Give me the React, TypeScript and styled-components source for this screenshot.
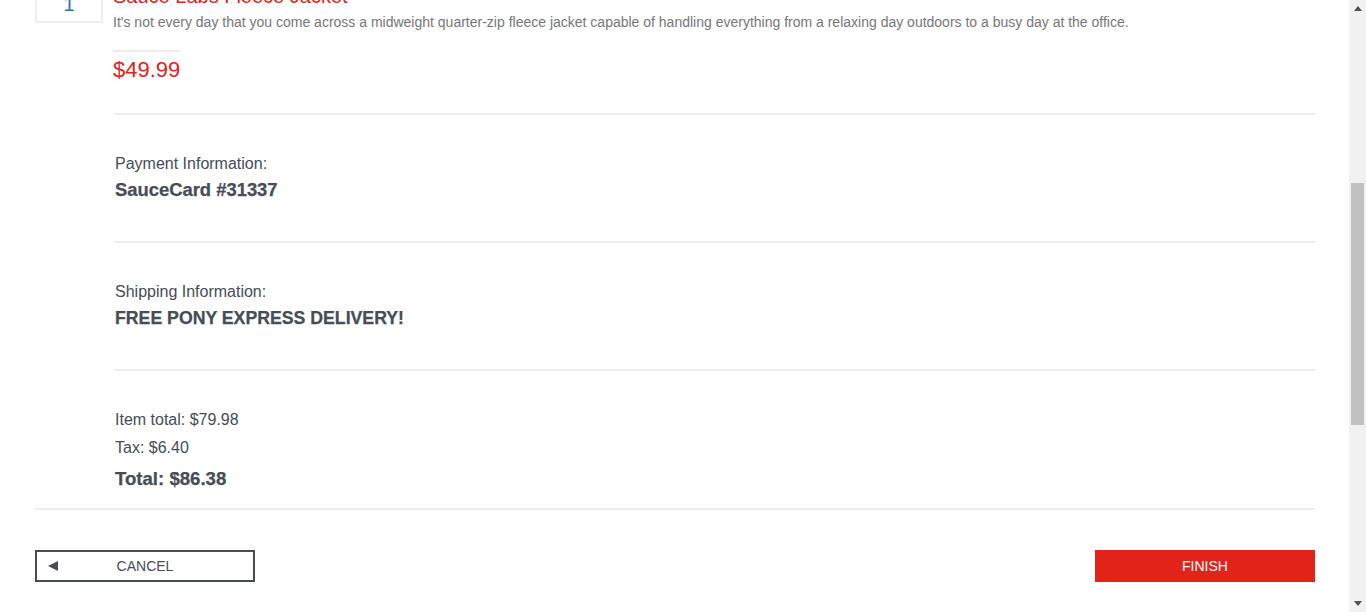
import React, { useLayoutEffect, useRef } from "react";
import styled, { createGlobalStyle } from "styled-components";

const GlobalStyle = createGlobalStyle`
  html, body {
    margin: 0;
    padding: 0;
    height: 100%;
    overflow: hidden;
    background: #ffffff;
  }
  body {
    font-family: "Liberation Sans", Arial, Helvetica, sans-serif;
    color: #474c55;
  }
  * { box-sizing: border-box; }
`;

const Frame = styled.div`
  display: flex;
  width: 100%;
  height: 612px;
`;

const Viewport = styled.div`
  flex: 1;
  min-width: 0;
  height: 100%;
  overflow: hidden;
`;

const Page = styled.div`
  display: flex;
  flex-direction: column;
`;

const Container = styled.div`
  padding: 0 34px 0 35px;
`;

/* ---------- header (above the fold) ---------- */
const Header = styled.header`
  display: flex;
  align-items: center;
  justify-content: space-between;
  height: 80px;
  padding: 0 35px;
  border-bottom: 1px solid #ededed;
`;

const Logo = styled.div`
  font-size: 28px;
  font-weight: 700;
  color: #474c55;
  letter-spacing: 1px;
`;

const CartIcon = styled.div`
  width: 40px;
  height: 40px;
  display: flex;
  align-items: center;
  justify-content: center;
`;

const SubHeader = styled.div`
  padding: 24px 0 0;
  font-size: 22px;
  color: #474c55;
`;

const ListHeader = styled.div`
  display: flex;
  gap: 10px;
  padding: 30px 0 0;
  font-size: 16px;
  line-height: 20px;
  color: #474c55;
`;

const ListHeaderQty = styled.div`
  width: 68px;
  text-align: center;
`;

/* ---------- cart items ---------- */
const CartItemRow = styled.div<{ $first?: boolean }>`
  display: flex;
  align-items: flex-start;
  gap: 10px;
  padding: ${(p) => (p.$first ? "20px" : "0")} 0 30px;
`;

const QtyBox = styled.div`
  width: 68px;
  flex: none;
  border: 2px solid #ededed;
  padding: 6px 0 5px;
  text-align: center;
  font-size: 20px;
  line-height: 24px;
  color: #2f6fc0;
`;

const ItemBody = styled.div`
  flex: 1;
  min-width: 0;
`;

const ItemName = styled.div`
  font-size: 20px;
  line-height: 24px;
  color: #e2231a;
`;

const ItemDesc = styled.div`
  margin-top: 4px;
  font-size: 14px;
  line-height: 20px;
  color: #777777;
`;

const ItemPrice = styled.div`
  width: fit-content;
  margin-top: 18px;
  border-top: 2px solid #ededed;
  padding-top: 5px;
  font-size: 22px;
  line-height: 26px;
  color: #e2231a;
`;

/* ---------- summary ---------- */
const Summary = styled.div`
  margin-left: 80px;
`;

const SummaryBlock = styled.div`
  border-top: 2px solid #ededed;
  padding: 39px 0 40px;
`;

const TotalsBlock = styled.div`
  border-top: 2px solid #ededed;
  padding: 39px 0 18px;
`;

const SummaryLabel = styled.div`
  font-size: 16px;
  line-height: 20px;
  color: #474c55;
`;

const SummaryValue = styled.div<{ $size: number }>`
  margin-top: 5px;
  font-size: ${(p) => p.$size}px;
  line-height: 22px;
  font-weight: 700;
  color: #474c55;
  -webkit-text-stroke: 0.25px #474c55;
`;

const SubtotalLine = styled.div`
  font-size: 16px;
  line-height: 20px;
  color: #474c55;
  & + & {
    margin-top: 8px;
  }
`;

const TotalLine = styled.div`
  margin-top: 10px;
  font-size: 18.6px;
  line-height: 22px;
  font-weight: 700;
  color: #474c55;
  -webkit-text-stroke: 0.25px #474c55;
`;

/* ---------- footer buttons ---------- */
const CartFooter = styled.div`
  display: flex;
  justify-content: space-between;
  border-top: 2px solid #ededed;
  padding-top: 40px;
`;

const BaseButton = styled.button`
  width: 220px;
  height: 32px;
  margin: 0;
  padding: 0;
  font-family: "Liberation Sans", Arial, Helvetica, sans-serif;
  font-size: 14px;
  text-transform: uppercase;
  cursor: pointer;
`;

const CancelButton = styled(BaseButton)`
  display: grid;
  grid-template-columns: 1fr auto 1fr;
  align-items: center;
  background: #ffffff;
  border: 2px solid #474c55;
  color: #474c55;
`;

const CancelArrow = styled.span`
  display: flex;
  justify-self: start;
  padding-left: 11px;
`;

const FinishButton = styled(BaseButton)`
  background: #e2231a;
  border: 2px solid #e2231a;
  color: #ffffff;
`;

/* ---------- page footer (below the fold) ---------- */
const PageFooter = styled.footer`
  margin-top: 80px;
  background: #474c55;
  color: #ffffff;
  height: 380px;
  padding: 40px 35px;
  font-size: 14px;
`;

/* ---------- scrollbar drawing ---------- */
const ScrollBar = styled.div`
  width: 17px;
  flex: none;
  display: flex;
  flex-direction: column;
  background: #f1f1f1;
`;

const ScrollButton = styled.div`
  height: 17px;
  flex: none;
  display: flex;
  align-items: center;
  justify-content: center;
`;

const ScrollRail = styled.div`
  flex: 1;
  padding: 0 2px;
`;

const ScrollThumb = styled.div`
  margin-top: 166px;
  height: 242px;
  background: #c1c1c1;
`;

const Arrow = ({ dir }: { dir: "up" | "down" }) => (
  <svg width="8" height="5" viewBox="0 0 8 5">
    <polygon
      points={dir === "up" ? "0,5 8,5 4,0" : "0,0 8,0 4,5"}
      fill="#505050"
    />
  </svg>
);

type Item = { name: string; desc: string; price: string };

const items: Item[] = [
  {
    name: "Sauce Labs Backpack",
    desc:
      "carry.allTheThings() with the sleek, streamlined Sly Pack that melds uncompromising style with unequaled laptop and tablet protection.",
    price: "$29.99",
  },
  {
    name: "Sauce Labs Fleece Jacket",
    desc:
      "It's not every day that you come across a midweight quarter-zip fleece jacket capable of handling everything from a relaxing day outdoors to a busy day at the office.",
    price: "$49.99",
  },
];

export default function App() {
  const viewportRef = useRef<HTMLDivElement>(null);
  const summaryRef = useRef<HTMLDivElement>(null);

  useLayoutEffect(() => {
    const vp = viewportRef.current;
    const anchor = summaryRef.current;
    if (!vp || !anchor) return;
    vp.scrollTop = 0;
    const delta =
      anchor.getBoundingClientRect().top - vp.getBoundingClientRect().top;
    vp.scrollTop = delta - 113;
  }, []);

  return (
    <>
      <GlobalStyle />
      <Frame>
        <Viewport ref={viewportRef}>
          <Page>
            <Header>
              <Logo>Swag Labs</Logo>
              <CartIcon>
                <svg width="28" height="26" viewBox="0 0 28 26">
                  <path
                    d="M1 2h4l3 14h15l3-10H7"
                    fill="none"
                    stroke="#474c55"
                    strokeWidth="2"
                  />
                  <circle cx="10" cy="22" r="2" fill="#474c55" />
                  <circle cx="21" cy="22" r="2" fill="#474c55" />
                </svg>
              </CartIcon>
            </Header>
            <Container>
              <SubHeader>Checkout: Overview</SubHeader>
              <ListHeader>
                <ListHeaderQty>QTY</ListHeaderQty>
                <div>DESCRIPTION</div>
              </ListHeader>
              {items.map((it, i) => (
                <CartItemRow key={it.name} $first={i === 0}>
                  <QtyBox>1</QtyBox>
                  <ItemBody>
                    <ItemName>{it.name}</ItemName>
                    <ItemDesc>{it.desc}</ItemDesc>
                    <ItemPrice>{it.price}</ItemPrice>
                  </ItemBody>
                </CartItemRow>
              ))}
              <Summary ref={summaryRef}>
                <SummaryBlock>
                  <SummaryLabel>Payment Information:</SummaryLabel>
                  <SummaryValue $size={18.4}>SauceCard #31337</SummaryValue>
                </SummaryBlock>
                <SummaryBlock>
                  <SummaryLabel>Shipping Information:</SummaryLabel>
                  <SummaryValue $size={17.7}>
                    FREE PONY EXPRESS DELIVERY!
                  </SummaryValue>
                </SummaryBlock>
                <TotalsBlock>
                  <SubtotalLine>Item total: $79.98</SubtotalLine>
                  <SubtotalLine>Tax: $6.40</SubtotalLine>
                  <TotalLine>Total: $86.38</TotalLine>
                </TotalsBlock>
              </Summary>
              <CartFooter>
                <CancelButton>
                  <CancelArrow>
                    <svg width="10" height="10" viewBox="0 0 10 10">
                      <polygon points="10,0 10,10 0,5" fill="#474c55" />
                    </svg>
                  </CancelArrow>
                  <span>Cancel</span>
                  <span />
                </CancelButton>
                <FinishButton>Finish</FinishButton>
              </CartFooter>
            </Container>
            <PageFooter>
              © 2020 Sauce Labs. All Rights Reserved. Terms of Service | Privacy
              Policy
            </PageFooter>
          </Page>
        </Viewport>
        <ScrollBar>
          <ScrollButton>
            <Arrow dir="up" />
          </ScrollButton>
          <ScrollRail>
            <ScrollThumb />
          </ScrollRail>
          <ScrollButton>
            <Arrow dir="down" />
          </ScrollButton>
        </ScrollBar>
      </Frame>
    </>
  );
}
